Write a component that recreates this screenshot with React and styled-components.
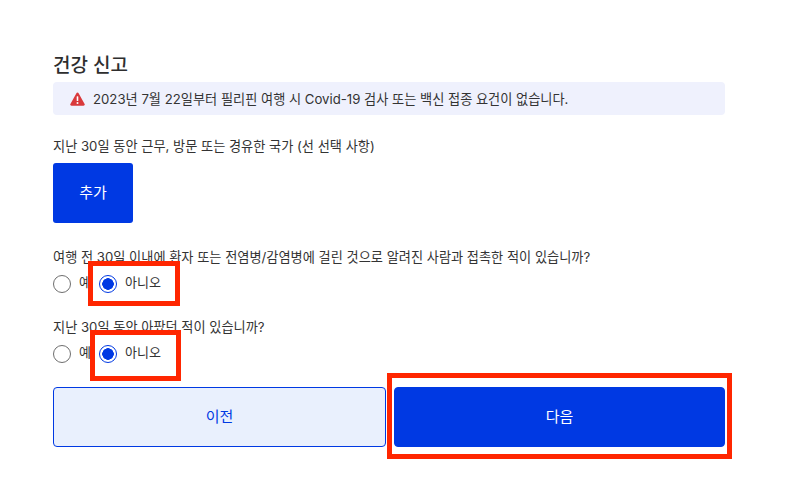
import React from 'react';
import styled, { createGlobalStyle } from 'styled-components';

const Global = createGlobalStyle`
  html, body { margin: 0; background: #fff; }
  body { font-family: Inter, "Noto Sans CJK KR", sans-serif; color: #2b2b2b; }
`;

const Page = styled.div`
  position: relative;
  width: 791px;
  height: 480px;
  overflow: hidden;
  box-sizing: border-box;
  padding: 52px 66px 0 53px;
`;

const Title = styled.h2`
  margin: 0;
  height: 30px;
  font-size: 19px;
  line-height: 27px;
  font-weight: 500;
  color: #2e2e2e;
`;

const Notice = styled.div`
  display: flex;
  align-items: center;
  gap: 8px;
  height: 33px;
  padding-left: 17px;
  background: #eff1fd;
  border-radius: 4px;
  font-size: 13.2px;
  color: #333;
`;

const Label = styled.div`
  font-size: 13.2px;
  line-height: 18px;
  color: #333;
  margin-top: ${p => p.$top}px;
`;

const AddButton = styled.button`
  display: block;
  width: 80px;
  height: 60px;
  margin-top: 8px;
  padding: 0 0 3px;
  background: #0039e3;
  color: #fff;
  border: 0;
  border-radius: 3px;
  font: 400 15px Inter, "Noto Sans CJK KR", sans-serif;
`;

const RadioRow = styled.div`
  display: flex;
  align-items: center;
  height: 18px;
  margin-top: ${p => p.$top}px;
  font-size: 13px;
  line-height: 16px;
  color: #333;
`;

const Option = styled.label`
  display: flex;
  align-items: center;
  gap: 8px;
  margin-right: 8px;
`;

const OptionText = styled.span`
  position: relative;
  top: -2px;
`;

const Radio = styled.span`
  box-sizing: border-box;
  width: 18px;
  height: 18px;
  border-radius: 50%;
  border: 1px solid ${p => (p.$on ? '#0039e3' : '#6e6e6e')};
  background: ${p => (p.$on ? 'radial-gradient(circle, #0039e3 0 5.5px, #fff 6px)' : '#fff')};
`;

const Footer = styled.div`
  display: flex;
  gap: 8px;
  margin-top: 24px;
`;

const NavButton = styled.button`
  box-sizing: border-box;
  height: 60px;
  width: ${p => p.$w}px;
  padding: 0 0 3px;
  border-radius: 4px;
  border: 1px solid #0039e3;
  background: ${p => (p.$primary ? '#0039e3' : '#e9f0fd')};
  color: ${p => (p.$primary ? '#fff' : '#0039e3')};
  font: 400 15px Inter, "Noto Sans CJK KR", sans-serif;
`;

// red annotation boxes drawn over the screenshot
const Marker = styled.div`
  position: absolute;
  box-sizing: border-box;
  border: 5px solid #ff2600;
  left: ${p => p.$x}px;
  top: ${p => p.$y}px;
  width: ${p => p.$w}px;
  height: ${p => p.$h}px;
`;

function WarningIcon() {
  return (
    <svg width="15" height="14" viewBox="0 0 15 14">
      <path d="M7.5 0.6c.5 0 .9.3 1.1.7l6 10.6c.5.8-.1 1.8-1.1 1.8H1.5c-1 0-1.6-1-1.1-1.8l6-10.6c.2-.4.6-.7 1.1-.7z" fill="#d9393c" />
      <rect x="6.7" y="4.2" width="1.6" height="4.8" rx=".6" fill="#fff" />
      <circle cx="7.5" cy="10.9" r="1" fill="#fff" />
    </svg>
  );
}

function YesNo({ top }) {
  return (
    <RadioRow $top={top}>
      <Option><Radio /><OptionText>예</OptionText></Option>
      <Option><Radio $on /><OptionText>아니오</OptionText></Option>
    </RadioRow>
  );
}

export default function App() {
  return (
    <Page>
      <Global />
      <Title>건강 신고</Title>
      <Notice>
        <WarningIcon />
        <span>2023년 7월 22일부터 필리핀 여행 시 Covid-19 검사 또는 백신 접종 요건이 없습니다.</span>
      </Notice>
      <Label $top={22}>지난 30일 동안 근무, 방문 또는 경유한 국가 (선 선택 사항)</Label>
      <AddButton>추가</AddButton>
      <Label $top={25}>여행 전 30일 이내에 환자 또는 전염병/감염병에 걸린 것으로 알려진 사람과 접촉한 적이 있습니까?</Label>
      <YesNo top={9} />
      <Label $top={25}>지난 30일 동안 아팠던 적이 있습니까?</Label>
      <YesNo top={9} />
      <Footer>
        <NavButton $w={333}>이전</NavButton>
        <NavButton $w={331} $primary>다음</NavButton>
      </Footer>
      <Marker $x={88} $y={261} $w={92} $h={45} />
      <Marker $x={90} $y={330} $w={91} $h={51} />
      <Marker $x={387} $y={373} $w={345} $h={86} />
    </Page>
  );
}
